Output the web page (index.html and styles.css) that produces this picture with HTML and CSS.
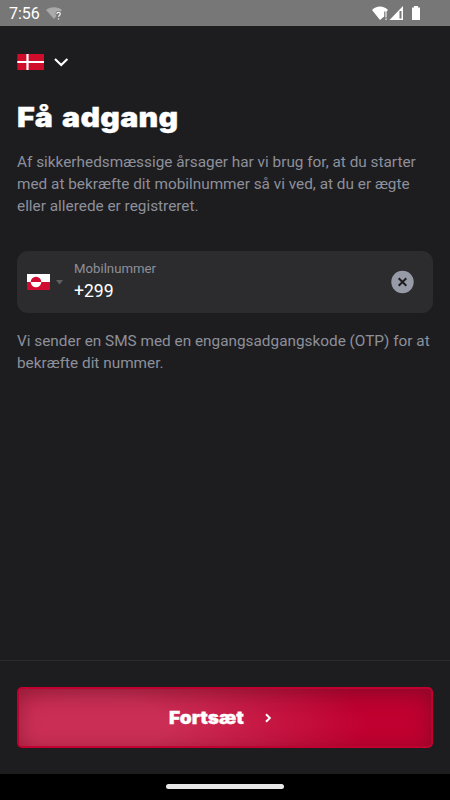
FILE: index.html
```html
<!DOCTYPE html>
<html lang="da">
<head>
<meta charset="utf-8">
<title>Få adgang</title>
<link rel="stylesheet" href="styles.css">
</head>
<body>
<div class="screen">
  <header class="status">
    <span class="time">7:56</span>
    <svg class="wifi-unknown" width="17" height="14" viewBox="0 0 17 14"><path d="M0 3C4-.8 12-.8 16 3l-1.500 1.500c-3-1.500-5 0-5 2.500l1 2-2.500 3z" fill="#a9a9a9"/><path d="M10.800 7c.2-2.100 3.500-2 3.400 0 0 1.400-1.700 1.500-1.700 2.800M12.500 11.300v1.300" fill="none" stroke="#eee" stroke-width="1.300"/></svg>
    <svg class="signals" width="50" height="16" viewBox="0 0 50 16"><path d="M0 4C4-.7 12-.7 16 4l-1.500 1.500h-2.300v5L8 14z" fill="#fff"/><path d="M14 5v6.500M14 12.500v1.500" stroke="#e8e8e8" stroke-width="1.300"/><path d="M31 0v14H17.500z" fill="#fff"/><path d="M28.500 5v7.500" stroke="#777" stroke-width="2"/><path d="M42 0h4v1.500h2V14h-8V1.500h2z" fill="#fff"/></svg>
  </header>
  <main class="content">
    <div class="language">
      <svg width="27" height="16" viewBox="0 0 27 16"><path d="M.3 0H27v16H.3z" fill="#d00c2b"/><path d="M10.500 0v16M.3 8H27" stroke="#fff" stroke-width="2.200"/></svg>
      <svg width="16" height="10" viewBox="0 0 16 10"><path d="M2 2l6.200 6 6.200-6" fill="none" stroke="#fff" stroke-width="2.200"/></svg>
    </div>
    <h1 class="title">Få adgang</h1>
    <p class="text intro">Af sikkerhedsmæssige årsager har vi brug for, at du starter<br>med at bekræfte dit mobilnummer så vi ved, at du er ægte<br>eller allerede er registreret.</p>
    <div class="field">
      <svg class="country" width="23" height="16" viewBox="0 0 23 16"><path d="M0 0h23v16H0z" fill="#fff"/><path d="M0 8h23v8H0z" fill="#d00c33"/><path d="M3.700 8a5.300 5.300 0 0 1 10.600 0z" fill="#d00c33"/><path d="M3.700 8a5.300 5.300 0 0 0 10.600 0z" fill="#fff"/></svg>
      <svg class="caret" width="7" height="5" viewBox="0 0 7 5"><path d="M0 0h7L3.500 4.500z" fill="#616164"/></svg>
      <div class="number"><span class="label">Mobilnummer</span><span class="value">+299</span></div>
      <svg class="clear" width="24" height="24" viewBox="0 0 24 24"><circle cx="12.500" cy="12" r="11.200" fill="#979ba8"/><path d="M8.700 8.200l7.600 7.600M16.300 8.200l-7.600 7.600" stroke="#1d1d1f" stroke-width="2"/></svg>
    </div>
    <p class="text note">Vi sender en SMS med en engangsadgangskode (OTP) for at<br>bekræfte dit nummer.</p>
  </main>
  <footer class="actions">
    <div class="button"><span class="button-label">Fortsæt</span><svg width="8" height="10" viewBox="0 0 8 10"><path d="M2 1.300L5.800 5 2 8.700" fill="none" stroke="#fff" stroke-width="2"/></svg></div>
  </footer>
  <div class="navbar"><div class="handle"></div></div>
</div>
</body>
</html>
```
FILE: styles.css
```css
* { box-sizing: border-box; }
body { margin: 0; background: #1d1d1f; font-family: Roboto, sans-serif; }
svg { display: block; flex: none; }
.screen { width: 450px; height: 800px; display: flex; flex-direction: column; overflow: hidden; }
.status { height: 26px; flex: none; background: #777; display: flex; align-items: flex-start; padding: 6px 28px 0 9px; color: #fff; }
.time { font-size: 16px; line-height: 16px; width: 37px; white-space: nowrap; }
.wifi-unknown { margin-top: 1px; }
.signals { margin-left: auto; }
.content { flex: 1; padding: 28px 17px 0; }
.language { display: flex; align-items: center; gap: 9px; height: 16px; }
.title { width: max-content; margin: 28px 0 0; font: 900 27.500px/38px Inter, sans-serif; color: #fff; white-space: nowrap; word-spacing: 2.500px; letter-spacing: .2px; transform: scaleX(1.105); transform-origin: 0 50%; -webkit-text-stroke: .3px #fff; }
.text { margin: 0; font-size: 15.35px; line-height: 22px; color: #8d909b; white-space: nowrap; }
.intro { margin-top: 15px; }
.field { display: flex; align-items: center; height: 62px; margin: 34px 0 17px; border-radius: 11px; background: #2c2c2e; padding: 0 19px 0 10px; }
.caret { margin: 0 11px 0 6px; }
.number { flex: 1; display: flex; flex-direction: column; padding-bottom: 2px; }
.label { font-size: 13.2px; line-height: 19px; color: #8d909b; }
.value { font-size: 17.6px; line-height: 26px; color: #fff; }
.actions { height: 114px; flex: none; border-top: 1px solid #2b2b2d; padding: 26px 17px 0; }
.button { height: 61px; border: 2px solid #c00030; border-radius: 5px; display: flex; align-items: center; justify-content: center; gap: 19px; padding-right: 9px; color: #fff; background: radial-gradient(ellipse 270px 110px at 19% 65%, rgba(255,255,255,.18) 25%, rgba(255,255,255,0) 100%), #c00030; box-shadow: inset 0 5px 20px rgba(40,20,20,.35); }
.button-label { width: 76px; font: 900 17px/24px Inter, sans-serif; white-space: nowrap; transform: scaleX(1.12); transform-origin: 0 50%; -webkit-text-stroke: .3px #fff; }
.navbar { height: 26px; flex: none; background: #000; display: flex; justify-content: center; padding-top: 10px; }
.handle { width: 118px; height: 5px; border-radius: 2.500px; background: #e8e8e8; }
```
